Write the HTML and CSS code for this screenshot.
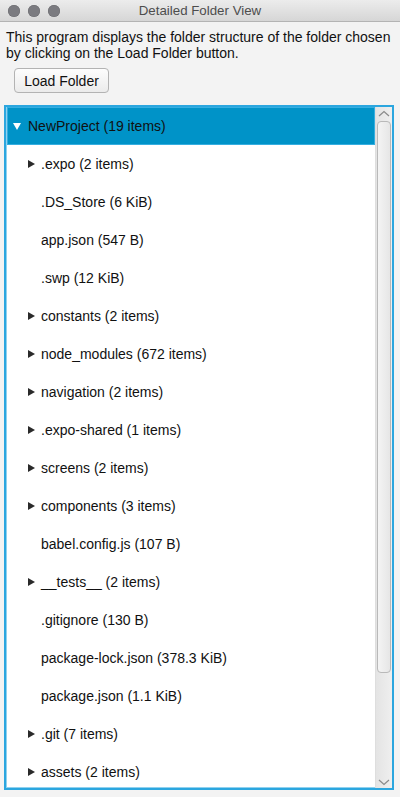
FILE: index.html
```html
<!DOCTYPE html>
<html>
<head>
<meta charset="utf-8">
<link rel="stylesheet" href="styles.css">
</head>
<body>
<div class="window">
  <div class="titlebar">
    <div class="lights"><span class="light"></span><span class="light"></span><span class="light"></span></div>
    <div class="title">Detailed Folder View</div>
    <div></div>
  </div>
  <p class="desc">This program displays the folder structure of the folder chosen by clicking on the Load Folder button.</p>
  <button class="btn">Load Folder</button>
  <div class="tree">
    <div class="list">
      <div class="row root selected"><span class="arrow down"></span><span>NewProject (19 items)</span></div>
      <div class="row"><span class="arrow right"></span><span>.expo (2 items)</span></div>
      <div class="row"><span class="arrow"></span><span>.DS_Store (6 KiB)</span></div>
      <div class="row"><span class="arrow"></span><span>app.json (547 B)</span></div>
      <div class="row"><span class="arrow"></span><span>.swp (12 KiB)</span></div>
      <div class="row"><span class="arrow right"></span><span>constants (2 items)</span></div>
      <div class="row"><span class="arrow right"></span><span>node_modules (672 items)</span></div>
      <div class="row"><span class="arrow right"></span><span>navigation (2 items)</span></div>
      <div class="row"><span class="arrow right"></span><span>.expo-shared (1 items)</span></div>
      <div class="row"><span class="arrow right"></span><span>screens (2 items)</span></div>
      <div class="row"><span class="arrow right"></span><span>components (3 items)</span></div>
      <div class="row"><span class="arrow"></span><span>babel.config.js (107 B)</span></div>
      <div class="row"><span class="arrow right"></span><span>__tests__ (2 items)</span></div>
      <div class="row"><span class="arrow"></span><span>.gitignore (130 B)</span></div>
      <div class="row"><span class="arrow"></span><span>package-lock.json (378.3 KiB)</span></div>
      <div class="row"><span class="arrow"></span><span>package.json (1.1 KiB)</span></div>
      <div class="row"><span class="arrow right"></span><span>.git (7 items)</span></div>
      <div class="row"><span class="arrow right"></span><span>assets (2 items)</span></div>
    </div>
    <div class="scrollbar">
      <div class="sb-btn"><svg width="12" height="7" viewBox="0 0 12 7"><path d="M1 6 L6 1.5 L11 6" fill="none" stroke="#8a8a8a" stroke-width="1.2"/></svg></div>
      <div class="track"><div class="thumb"></div></div>
      <div class="sb-btn"><svg width="12" height="7" viewBox="0 0 12 7"><path d="M1 1 L6 5.5 L11 1" fill="none" stroke="#8a8a8a" stroke-width="1.2"/></svg></div>
    </div>
  </div>
</div>
</body>
</html>
```

FILE: styles.css
```css
html, body {
  margin: 0;
  padding: 0;
  background: #f3f3f3;
}
body {
  width: 400px;
  height: 797px;
  overflow: hidden;
  font-family: "Liberation Sans", Arial, sans-serif;
  font-size: 14px;
  color: #111;
}
.window {
  display: flex;
  flex-direction: column;
  height: 797px;
}
.titlebar {
  height: 21px;
  display: grid;
  grid-template-columns: 1fr auto 1fr;
  align-items: center;
  background: linear-gradient(#ececec, #d6d6d6);
  border-bottom: 1px solid #b4b4b4;
  flex: none;
}
.lights {
  display: flex;
  gap: 8px;
  padding-left: 8px;
}
.light {
  width: 12px;
  height: 12px;
  border-radius: 50%;
  background: #7b7b80;
  box-shadow: inset 0 0 0 0.5px #6a6a6e;
}
.title {
  color: #4d4d4d;
  font-size: 13.3px;
}
.desc {
  margin: 7px 0 0 0;
  padding: 0 0 0 6px;
  line-height: 16px;
}
.btn {
  align-self: flex-start;
  margin: 7px 0 0 14px;
  width: 95px;
  height: 25px;
  padding: 0;
  border: 1px solid #b3b3b3;
  border-radius: 4px;
  background: linear-gradient(#fdfdfd, #ebebeb);
  font-family: "Liberation Sans", Arial, sans-serif;
  font-size: 14px;
  color: #111;
}
.tree {
  margin: 12px 0 0 4px;
  width: 386px;
  height: 681px;
  border: 2px solid #2ba6df;
  box-shadow: inset 0 0 0 1px #8fd1ef;
  background: #fff;
  display: flex;
  flex: none;
}
.list {
  flex: 1;
  overflow: hidden;
}
.row {
  height: 38px;
  display: flex;
  align-items: center;
  padding-left: 22px;
}
.row.root {
  padding-left: 7px;
}
.row.selected {
  background: #0093c8;
  box-shadow: inset 0 0 0 1px #36aee0;
  margin-left: 1px;
  padding-left: 6px;
}
.arrow {
  width: 13px;
  height: 10px;
  flex: none;
  position: relative;
}
.root .arrow {
  width: 15px;
}
.arrow.right::before {
  content: "";
  position: absolute;
  left: 0;
  top: 1px;
  border-left: 7px solid #2a2a2a;
  border-top: 4px solid transparent;
  border-bottom: 4px solid transparent;
}
.arrow.down::before {
  content: "";
  position: absolute;
  left: 0;
  top: 2px;
  border-top: 7px solid #fff;
  border-left: 4px solid transparent;
  border-right: 4px solid transparent;
}
.scrollbar {
  width: 16px;
  flex: none;
  display: flex;
  flex-direction: column;
  background: linear-gradient(90deg, #e4e4e4, #efefef);
  border-left: 1px solid #dedede;
}
.sb-btn {
  height: 12px;
  display: flex;
  align-items: center;
  justify-content: center;
  flex: none;
}
.track {
  flex: 1;
  padding: 2px 1px 0 1px;
}
.thumb {
  height: 552px;
  border: 1px solid #b9b9b9;
  border-radius: 4px;
  background: linear-gradient(90deg, #f4f4f4, #e6e6e6);
  box-sizing: border-box;
}
```
